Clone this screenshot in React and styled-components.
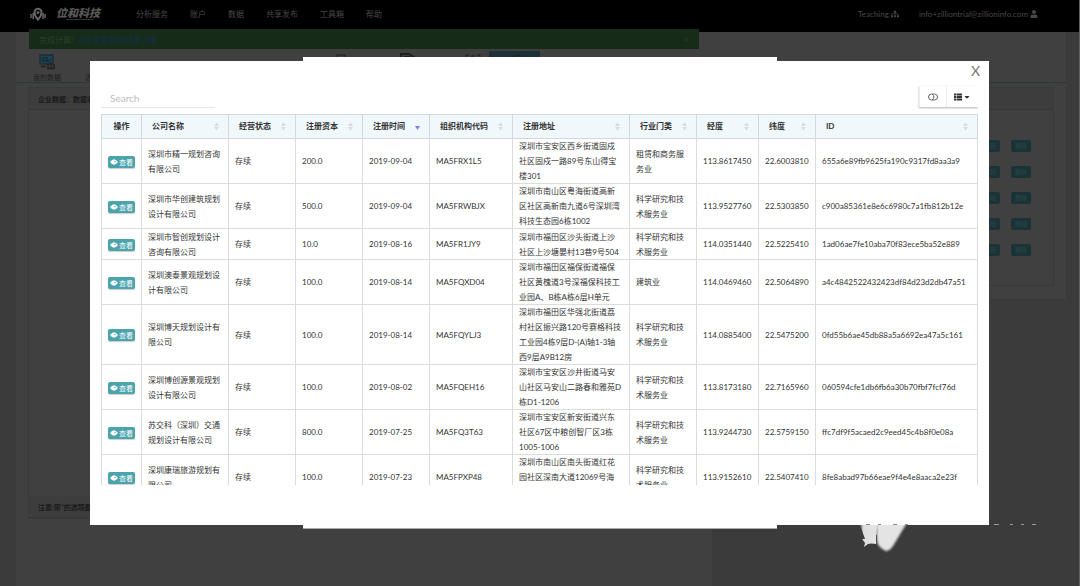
import React, { Fragment } from 'react';
import styled, { createGlobalStyle } from 'styled-components';
import { FaSitemap, FaUser, FaThList, FaCaretDown } from 'react-icons/fa';

const GlobalStyle = createGlobalStyle`
  *, *::before, *::after { box-sizing: border-box; }
  body {
    margin: 0;
    font-family: Lato, "Noto Sans CJK SC", sans-serif;
    font-size: 8px;
    color: #333;
    overflow: hidden;
  }
  button, input { font: inherit; color: inherit; margin: 0; }
`;

const Page = styled.div`
  min-height: 100vh;
  display: flex;
  flex-direction: column;
  background: #3b3b3b;
  border-right: 1px solid #626262;
`;

const TopBar = styled.header`
  height: 32px;
  background: #000;
  display: flex;
  align-items: center;
  padding: 0 41px 5px 30px;
  color: #484848;
  flex: none;
`;

const LogoMark = styled.svg`
  width: 16px;
  height: 14px;
  margin-right: 10px;
`;

const Brand = styled.div`
  width: 80px;
  display: flex;
  flex-direction: column;
  color: #585858;
  font-size: 11px;
  font-weight: 900;
  font-style: italic;
  line-height: 12px;
`;

const BrandLine = styled.span`
  width: 28px;
  height: 1px;
  margin-left: 10px;
  background: #333;
`;

const Nav = styled.nav`
  display: flex;
  gap: 22px;
  flex: 1;
`;

const NavLink = styled.a`
  color: inherit;
  text-decoration: none;
  display: inline-flex;
  align-items: center;
  gap: 2px;
  white-space: nowrap;
`;

const Account = styled.div`
  display: flex;
  align-items: center;
  gap: 20px;
`;

const Shell = styled.main`
  flex: 1;
  display: flex;
  flex-direction: column;
  margin: 0 13px 0 16px;
`;

const Tabs = styled.div`
  position: relative;
  height: 51px;
  background: #404040;
  border-bottom: 1px solid #2b3738;
  display: flex;
  align-items: flex-end;
  gap: 24px;
  padding: 0 0 0 17px;
`;

const Tab = styled.a`
  display: flex;
  flex-direction: column;
  align-items: center;
  gap: 2px;
  font-size: 7px;
  line-height: 10px;
  color: #1d1d1d;
  text-decoration: none;
  white-space: nowrap;
`;

const TabStrip = styled.div`
  position: absolute;
  top: 19px;
  left: 317px;
  display: flex;
  gap: 50px;
`;

const ActiveTab = styled.div`
  position: absolute;
  top: 19px;
  left: 473px;
  width: 51px;
  height: 20px;
  background: #1c3236;
  display: flex;
  justify-content: center;
`;

const Glyph = styled.svg`
  width: 16px;
  height: 14px;
  fill: none;
  stroke: #1f1f1f;
`;

const Notice = styled.div`
  position: absolute;
  top: 29px;
  left: 29px;
  width: 62%;
  height: 20px;
  background: #162b18;
  display: flex;
  align-items: center;
  gap: 4px;
  padding: 0 10px;
  color: #2c402d;
`;

const NoticeLink = styled.a`
  flex: 1;
  color: #142f48;
  text-decoration: none;
`;

const Columns = styled.div`
  flex: 1;
  display: flex;
  align-items: flex-start;
`;

const Column = styled.section`
  width: ${p => p.$width};
  height: ${p => (p.$fill ? 'auto' : '216px')};
  align-self: ${p => (p.$fill ? 'stretch' : 'flex-start')};
  padding: 4px 12px 13px;
  background: #404040;
`;

const Card = styled.div`
  height: ${p => p.$height};
  border: 1px solid #393939;
  display: flex;
  flex-direction: column;
  justify-content: space-between;
`;

const CardBar = styled.div`
  height: 22px;
  padding: 0 9px;
  background: #3d3d3d;
  border-bottom: 1px solid #373737;
  color: #1a1a1a;
  font-size: 7px;
  font-weight: ${p => (p.$bold ? 700 : 400)};
  line-height: 22px;
`;

const TagRows = styled.div`
  flex: 1;
  padding: 30px 22px 0;
  display: flex;
  flex-direction: column;
  gap: 14px;
`;

const TagRow = styled.div`
  display: flex;
  justify-content: flex-end;
  gap: 11px;
`;

const Tag = styled.button`
  width: 20px;
  height: 12px;
  padding: 0;
  border: 0;
  border-radius: 2px;
  background: #1a3337;
  color: #2b4648;
  font-size: 6px;
  line-height: 12px;
`;

const Overlay = styled.div`
  position: fixed;
  inset: 0;
  padding: 61px 91px 61px 90px;
  display: flex;
`;

const BackDialog = styled.div`
  position: absolute;
  top: 57px;
  bottom: 57px;
  left: 50%;
  width: 474px;
  margin-left: -237px;
  background: #fff;
  border-bottom: 1px solid #aaa;
`;

const Dialog = styled.div`
  position: relative;
  flex: 1;
  min-width: 0;
  display: flex;
  flex-direction: column;
  background: #fff;
  padding: 0 11px 40px;
`;

const DialogHead = styled.div`
  display: flex;
  justify-content: flex-end;
  height: 25px;
  margin-right: -2px;
`;

const CloseButton = styled.button`
  border: 0;
  padding: 0;
  height: 20px;
  background: none;
  color: #777;
  font-size: 14px;
  line-height: 20px;
`;

const Toolbar = styled.div`
  display: flex;
  justify-content: space-between;
  height: 28px;
  align-items: flex-start;
`;

const SearchBox = styled.input`
  width: 114px;
  height: 22px;
  border: 0;
  border-bottom: 1px solid #e8e8e8;
  padding: 2px 9px 0;
  background: none;
  outline: 0;
  font-size: 10px;
  &::placeholder { color: #bbb; opacity: 1; }
`;

const ButtonGroup = styled.div`
  display: flex;
  height: 21px;
  box-shadow: 0 1px 2px rgba(0, 0, 0, 0.3);
  clip-path: inset(-3px 0 -3px -3px);
`;

const ToolButton = styled.button`
  width: ${p => p.$width};
  border: 0;
  border-left: 1px solid #eee;
  padding: 0;
  background: #fff;
  color: #333;
  display: flex;
  align-items: center;
  justify-content: center;
  gap: 1px;
`;

const ToggleGlyph = styled.svg`
  width: 10px;
  height: 8px;
  fill: none;
  stroke: #666;
`;

const TableWrap = styled.div`
  flex: 1;
  min-height: 0;
  overflow: hidden;
`;

const Table = styled.table`
  width: 100%;
  table-layout: fixed;
  border-collapse: separate;
  border-spacing: 0;
  white-space: nowrap;
`;

const Th = styled.th`
  height: 25px;
  padding: 0 10px;
  background: #f0f8fc;
  box-shadow: inset -1px -1px #d0d9dc, inset 0 1px #d0d9dc;
  text-align: left;
  font-weight: 700;
  line-height: 15px;
  &:first-child { box-shadow: inset 1px 1px #d0d9dc, inset -1px -1px #d0d9dc; text-align: center; }
`;

const HeadCell = styled.div`
  display: flex;
  justify-content: space-between;
  align-items: center;
`;

const SortMark = styled.svg`
  width: 5px;
  height: 9px;
  flex: none;
`;

const Td = styled.td`
  height: 31px;
  padding: 0 0 0 6px;
  box-shadow: inset -1px -1px #dcdcdc;
  line-height: 15px;
  vertical-align: middle;
  &:first-child { box-shadow: inset 1px 0 #dcdcdc, inset -1px -1px #dcdcdc; padding-left: 7px; }
`;

const ViewButton = styled.button`
  display: flex;
  align-items: center;
  justify-content: center;
  gap: 1px;
  width: 27px;
  height: 12px;
  border: 0;
  border-radius: 2px;
  padding: 0;
  background: #4ba3ab;
  box-shadow: 0 1px 1px rgba(0, 0, 0, 0.2);
  color: #fff;
  font-size: 7px;
  line-height: 12px;
`;

const EyeGlyph = styled.svg`
  width: 8px;
  height: 6px;
  flex: none;
`;

const Mascot = styled.svg`
  position: absolute;
  right: 26px;
  bottom: 32px;
  width: 194px;
  height: 38px;
`;

const columns = [
  ['操作', 41], ['公司名称', 87], ['经营状态', 67], ['注册资本', 67], ['注册时间', 67],
  ['组织机构代码', 83], ['注册地址', 117], ['行业门类', 67], ['经度', 62], ['纬度', 57], ['ID', null],
];

const tech = '科学研究和技|术服务业';
const rows = [
  ['深圳市精一规划咨询|有限公司', '存续', '200.0', '2019-09-04', 'MA5FRX1L5', '深圳市宝安区西乡街道固戍|社区固戍一路89号东山得宝|楼301', '租赁和商务服|务业', '113.8617450', '22.6003810', '655a6e89fb9625fa190c9317fd8aa3a9'],
  ['深圳市华创建筑规划|设计有限公司', '存续', '500.0', '2019-09-04', 'MA5FRWBJX', '深圳市南山区粤海街道高新|区社区高新南九道6号深圳湾|科技生态园6栋1002', tech, '113.9527760', '22.5303850', 'c900a85361e8e6c6980c7a1fb812b12e'],
  ['深圳市智创规划设计|咨询有限公司', '存续', '10.0', '2019-08-16', 'MA5FR1JY9', '深圳市福田区沙头街道上沙|社区上沙塘晏村13巷9号504', tech, '114.0351440', '22.5225410', '1ad06ae7fe10aba70f83ece5ba52e889'],
  ['深圳澳泰景观规划设|计有限公司', '存续', '100.0', '2019-08-14', 'MA5FQXD04', '深圳市福田区福保街道福保|社区黄槐道3号深福保科技工|业园A、B栋A栋6层H单元', '建筑业', '114.0469460', '22.5064890', 'a4c4842522432423df84d23d2db47a51'],
  ['深圳博天规划设计有|限公司', '存续', '100.0', '2019-08-14', 'MA5FQYLJ3', '深圳市福田区华强北街道荔|村社区振兴路120号赛格科技|工业园4栋9层D-(A)轴1-3轴|西9层A9B12房', tech, '114.0885400', '22.5475200', '0fd55b6ae45db88a5a6692ea47a5c161'],
  ['深圳博创源景观规划|设计有限公司', '存续', '100.0', '2019-08-02', 'MA5FQEH16', '深圳市宝安区沙井街道马安|山社区马安山二路春和雅苑D|栋D1-1206', tech, '113.8173180', '22.7165960', '060594cfe1db6fb6a30b70fbf7fcf76d'],
  ['苏交科（深圳）交通|规划设计有限公司', '存续', '800.0', '2019-07-25', 'MA5FQ3T63', '深圳市宝安区新安街道兴东|社区67区中粮创智厂区3栋|1005-1006', tech, '113.9244730', '22.5759150', 'ffc7df9f5acaed2c9eed45c4b8f0e08a'],
  ['深圳康瑞旅游规划有|限公司', '存续', '100.0', '2019-07-23', 'MA5FPXP48', '深圳市南山区南头街道红花|园社区深南大道12069号海|岸时代', tech, '113.9152610', '22.5407410', '8fe8abad97b66eae9f4e4e8aaca2e23f'],
];

function Lines({ text }) {
  return text.split('|').map((line, i) => (
    <Fragment key={i}>{i > 0 && <br />}{line}</Fragment>
  ));
}

function Sort({ active }) {
  return (
    <SortMark viewBox="0 0 5 9" aria-hidden="true">
      {active
        ? <path d="M0 4h5L2.5 8z" fill="#7c86e0" />
        : <path d="M0 4L2.5 0.5 5 4zM0 5h5L2.5 8.5z" fill="#d5dde0" />}
    </SortMark>
  );
}

export default function App() {
  return (
    <>
      <GlobalStyle />
      <Page>
        <TopBar>
          <LogoMark viewBox="0 0 16 14" fill="none" stroke="#666" strokeWidth="1.5">
            <path d="M1 7v4M3.200 6v6M13 6v6M15 7v4" />
            <path d="M8 12.500C5.500 10 4.500 8 4.500 5.200a3.500 3.500 0 0 1 7 0C11.500 8 10.500 10 8 12.500z" strokeWidth="2" />
            <circle cx="8" cy="5.500" r="0.800" />
          </LogoMark>
          <Brand>位和科技<BrandLine /></Brand>
          <Nav>
            {['分析服务', '账户', '数据', '共享发布', '工具箱', '帮助'].map(t => (
              <NavLink href="#" key={t}>{t}</NavLink>
            ))}
          </Nav>
          <Account>
            <NavLink href="#">Teaching <FaSitemap size={8} /></NavLink>
            <NavLink href="#">info+zilliontrial@zillioninfo.com <FaUser size={8} /></NavLink>
          </Account>
        </TopBar>
        <Shell>
          <Tabs>
            <Tab href="#">
              <svg width="18" height="16" viewBox="0 0 18 16" fill="none" stroke="#172f3a" strokeWidth="1.500">
                <rect x="2" y="1" width="13" height="9" fill="#21414e" />
                <path d="M5 4h4v3H5zM10 8l3-3" />
                <path d="M3 12.500h5M10 10v4M13 8v6M16 10v4M9 14.500h8" stroke="#222" />
              </svg>
              我的数据
            </Tab>
            <Tab href="#">选址</Tab>
            <TabStrip>
              <Glyph viewBox="0 0 16 14"><path d="M4 12V4h8v8" /></Glyph>
              <Glyph viewBox="0 0 16 14"><path d="M2 12V3h8l6 4M5 6h6" strokeWidth="2" /></Glyph>
              <Glyph viewBox="0 0 16 14"><path d="M1 6V4h3M12 4h3v2M6 5h4" /></Glyph>
            </TabStrip>
            <ActiveTab><Glyph viewBox="0 0 16 14"><path d="M3 7l4-2 6-1v6" /></Glyph></ActiveTab>
          </Tabs>
          <Columns>
            <Column $width="66.3%" $fill>
              <Card $height="432px">
                <CardBar $bold>企业数据：数据收集</CardBar>
                <CardBar $bold>注意:带*的选项都是必填</CardBar>
              </Card>
            </Column>
            <Column $width="33.7%">
              <Card $height="199px">
                <CardBar />
                <TagRows>
                  {[0, 1, 2, 3, 4].map(i => (
                    <TagRow key={i}><Tag>编辑</Tag><Tag>删除</Tag></TagRow>
                  ))}
                </TagRows>
              </Card>
            </Column>
          </Columns>
        </Shell>
        <Notice>
          完成计算! <NoticeLink href="#">点击查看数据结果详情</NoticeLink><span>×</span>
        </Notice>
      </Page>

      <Overlay>
        <BackDialog />
        <Dialog role="dialog" aria-label="企业数据">
          <DialogHead><CloseButton aria-label="关闭">X</CloseButton></DialogHead>
          <Toolbar>
            <SearchBox type="text" placeholder="Search" aria-label="Search" />
            <ButtonGroup>
              <ToolButton $width="27px" aria-label="切换视图">
                <ToggleGlyph viewBox="0 0 10 8">
                  <rect x="0.500" y="1" width="9" height="6" rx="3" />
                  <path d="M4 1.200a3 3 0 0 1 0 5.600" />
                </ToggleGlyph>
              </ToolButton>
              <ToolButton $width="32px" aria-label="选择列">
                <FaThList size={8} /><FaCaretDown size={8} />
              </ToolButton>
            </ButtonGroup>
          </Toolbar>
          <TableWrap>
            <Table>
              <colgroup>
                {columns.map(([name, width]) => <col key={name} width={width ?? undefined} />)}
              </colgroup>
              <thead>
                <tr>
                  {columns.map(([name], i) => (
                    <Th key={name} scope="col">
                      {i === 0 ? name : <HeadCell>{name}<Sort active={i === 4} /></HeadCell>}
                    </Th>
                  ))}
                </tr>
              </thead>
              <tbody>
                {rows.map(row => (
                  <tr key={row[9]}>
                    <Td>
                      <ViewButton>
                        <EyeGlyph viewBox="0 0 8 6" aria-hidden="true">
                          <path d="M0 3q4-5.500 8 0q-4 5.500-8 0z" fill="#fff" />
                          <circle cx="5" cy="2.500" r="0.700" fill="#4ba3ab" />
                        </EyeGlyph>
                        查看
                      </ViewButton>
                    </Td>
                    {row.map((cell, i) => <Td key={i}><Lines text={cell} /></Td>)}
                  </tr>
                ))}
              </tbody>
            </Table>
          </TableWrap>
        </Dialog>
        <Mascot viewBox="0 0 194 38" aria-hidden="true">
          <defs>
            <linearGradient id="fade" x1="0" y1="0" x2="1" y2="0">
              <stop offset="0" stopColor="#ddd" stopOpacity="0.200" />
              <stop offset="0.200" stopColor="#ddd" />
              <stop offset="1" stopColor="#e4e4e4" />
            </linearGradient>
            <filter id="soft" x="-10%" y="-10%" width="120%" height="120%">
              <feGaussianBlur stdDeviation="1.2" />
            </filter>
            <clipPath id="below"><path d="M0 9h194v29H0z" /></clipPath>
          </defs>
          <g clipPath="url(#below)">
            <path d="M16 5h32L33 30q-5 7-9 4-6-3-7-9z" fill="#e4e4e4" filter="url(#soft)" />
            <path d="M0 9h17l-1 19q-5-1-8 0l-4 3 1-4-3-4h3z" fill="url(#fade)" />
            <path d="M16.500 19v7" stroke="#3b3b3b" strokeWidth="0.800" />
          </g>
          <path d="M6 8.500h4M18 8.500h3M33 8.500h4M45 8.500h3" stroke="#888" />
          <path d="M134 8.500h5M150 8.500h3M161 8.500h3M172 8.500h4" stroke="#999" />
        </Mascot>
      </Overlay>
    </>
  );
}
